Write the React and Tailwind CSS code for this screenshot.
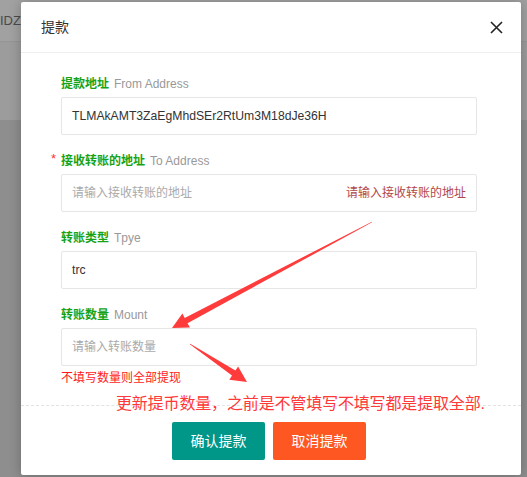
import React from "react";

const fields = [
  { id: 1, label: "提款地址", en: "From Address", value: "TLMAkAMT3ZaEgMhdSEr2RtUm3M18dJe36H" },
  { id: 2, label: "接收转账的地址", en: "To Address", placeholder: "请输入接收转账的地址", required: true, error: "请输入接收转账的地址" },
  { id: 3, label: "转账类型", en: "Tpye", value: "trc" },
  { id: 4, label: "转账数量", en: "Mount", placeholder: "请输入转账数量" },
];

const font = "font-['Liberation_Sans','Noto_Sans_CJK_SC',sans-serif]";

const Field = ({ field, last }) => (
  <div className={last ? "" : "mb-[16px]"}>
    <div className="relative h-[20px] flex items-center text-[12px] leading-[20px]">
      {field.required && (
        <span className="absolute left-[-10px] top-[-2px] text-[13px] text-[#ff3333]">*</span>
      )}
      <span className="font-bold text-[#17a317]">{field.label}</span>
      <span className="ml-[5px] text-[#999] text-[12px]">{field.en}</span>
    </div>
    <div className="mt-[3px] h-[38px] border border-[#e6e6e6] rounded-[2px] flex items-center justify-between px-[10px]">
      {field.value ? (
        <span className="text-[12.2px] text-[#333]">{field.value}</span>
      ) : (
        <span className="text-[12px] text-[#aaa]">{field.placeholder}</span>
      )}
      {field.error && <span className="text-[12px] text-[#b3474a]">{field.error}</span>}
    </div>
  </div>
);

export default function App() {
  return (
    <div className={`relative w-[527px] h-[477px] overflow-hidden bg-[#8e8e8e] ${font}`}>
      {/* page behind the overlay */}
      <div className="h-[42px] bg-[#a1a1a1] border-b border-[#959595] flex items-center">
        <span className="text-[13px] text-[#4a4a4a]">IDZU</span>
      </div>
      <div className="h-[78px] bg-[#9c9c9c]"></div>

      {/* dialog */}
      <div className="absolute left-[21px] top-[2px] w-[500px] bg-white rounded-[2px] shadow-[0_1px_12px_rgba(0,0,0,0.25)] flex flex-col">
        <div className="h-[51px] border-b border-[#eee] flex items-center justify-between pl-[20px] pr-[18px]">
          <span className="text-[14px] text-[#333]">提款</span>
          <svg width="13" height="13" viewBox="0 0 13 13" className="text-[#222]">
            <path d="M1 1L12 12M12 1L1 12" stroke="currentColor" strokeWidth="1.6" />
          </svg>
        </div>

        <div className="pl-[40px] pr-[44px] pt-[21px]">
          {fields.map((f, i) => (
            <Field key={f.id} field={f} last={i === fields.length - 1} />
          ))}
          <div className="mt-[4px] h-[16px] leading-[16px] text-[12px] text-[#ff1a1a]">不填写数量则全部提现</div>
        </div>

        <div className="mt-[19px] border-t border-dashed border-[#e2e2e2]"></div>

        <div className="pt-[16px] pb-[15px] flex justify-center gap-[8px] pr-[4px]">
          <button className="h-[38px] w-[93px] rounded-[2px] bg-[#009688] text-white text-[14px]">确认提款</button>
          <button className="h-[38px] w-[93px] rounded-[2px] bg-[#ff5722] text-white text-[14px]">取消提款</button>
        </div>
      </div>

      {/* annotation */}
      <div className="absolute left-[116px] top-[396px] text-[16px] leading-[16px] tracking-[-0.15px] text-[#ff3838] whitespace-nowrap">
        更新提币数量，之前是不管填写不填写都是提取全部.
      </div>
      <svg className="absolute left-0 top-0 pointer-events-none" width="527" height="477" viewBox="0 0 527 477">
        <polygon
          fill="#ff3b3b"
          points="371.9,221.7 184.7,317.9 182.4,313.4 172,328 189.9,327.6 187.5,323.2 372.1,222.3"
        />
        <polygon
          fill="#ff3b3b"
          points="190.2,343.8 235.4,370.6 238.1,366.4 247,382 229.3,379.8 232,375.6 189.8,344.2"
        />
      </svg>
    </div>
  );
}
